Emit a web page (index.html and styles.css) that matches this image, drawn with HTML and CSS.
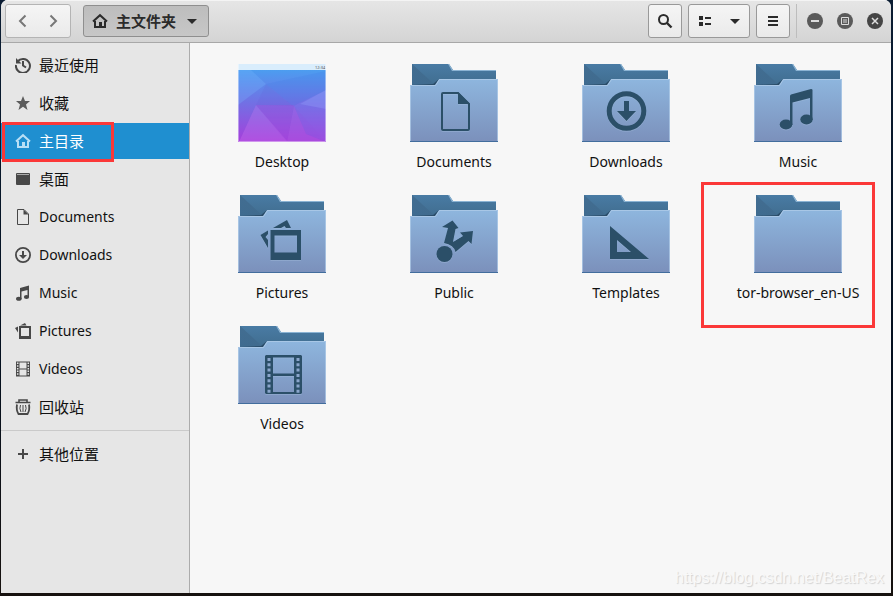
FILE: index.html
```html
<!DOCTYPE html>
<html lang="zh-CN">
<head>
<meta charset="utf-8">
<meta name="viewport" content="width=device-width, initial-scale=1">
<title>主文件夹</title>
<link rel="stylesheet" href="styles.css">
</head>
<body>
<svg class="defs" aria-hidden="true">
  <defs>
    <linearGradient id="front" x1="0" y1="0" x2="0" y2="1"><stop offset="0" stop-color="#8eb6de"/><stop offset="1" stop-color="#7b90bb"/></linearGradient>
    <linearGradient id="back" x1="0" y1="0" x2="0" y2="1"><stop offset="0" stop-color="#497ba4"/><stop offset="1" stop-color="#3f6b8c"/></linearGradient>
    <linearGradient id="fold" x1="0" y1="1" x2="1" y2="0"><stop offset="0" stop-color="#3f6b90"/><stop offset="1" stop-color="#41698a"/></linearGradient>
    <linearGradient id="wall" x1="0" y1="0" x2="0" y2="1"><stop offset="0" stop-color="#45a5f2"/><stop offset=".5" stop-color="#7270e4"/><stop offset="1" stop-color="#a63edb"/></linearGradient>
    <symbol id="folder" viewBox="0 0 88 78">
      <path d="M2 0H39L43 6H86V24H2Z" fill="url(#back)"/>
      <path d="M2 0L25 21H2Z" fill="url(#fold)" opacity=".8"/>
      <path d="M39 0L43 6H86V7H42L38 0Z" fill="#8bb3d3"/>
      <path d="M2 21L23 20L29 15V22H2Z" fill="#2b4d69"/>
      <path d="M0 21H25L29 15H88V78H0Z" fill="url(#front)"/>
      <path d="M.5 77V21.500H25.500L29.500 15.500H87.500V77" fill="none" stroke="#b4cfe9" stroke-opacity=".7"/>
      <path d="M0 77H88V78H0Z" fill="#426d9d"/>
    </symbol>
    <symbol id="home" viewBox="0 0 16 16"><path d="M1 8.500L8 2.200L15 8.500" fill="none" stroke="currentColor" stroke-width="2"/><path d="M3 8V14H13V8" fill="none" stroke="currentColor" stroke-width="2"/><path d="M7 9H10V14H7Z" fill="currentColor"/></symbol>
  </defs>
</svg>
<div class="window">
  <header class="bar">
    <div class="box nav">
      <button aria-label="后退"><svg width="16" height="16" viewBox="0 0 16 16"><path d="M11.500 2.500L6 8L11.500 13.500" fill="none" stroke="#777" stroke-width="2"/></svg></button>
      <button aria-label="前进"><svg width="16" height="16" viewBox="0 0 16 16"><path d="M4.500 2.500L10 8L4.500 13.500" fill="none" stroke="#777" stroke-width="2"/></svg></button>
    </div>
    <button class="path">
      <svg width="16" height="16"><use href="#home"/></svg>
      <span>主文件夹</span>
      <svg width="16" height="16" viewBox="0 0 16 16"><path d="M3 6H13L8 11Z" fill="currentColor"/></svg>
    </button>
    <div class="tools">
      <button class="box square" aria-label="搜索"><svg width="16" height="16" viewBox="0 0 16 16"><circle cx="6.500" cy="6.500" r="4.500" fill="none" stroke="currentColor" stroke-width="2"/><path d="M10 10L14.500 14.500" stroke="currentColor" stroke-width="2.400"/></svg></button>
      <div class="box view">
        <button aria-label="列表视图"><svg width="16" height="16" viewBox="0 0 16 16"><path d="M3 3H7V7H3ZM3 9H7V13H3ZM9 4H15V6H9ZM9 10H15V12H9Z" fill="currentColor"/></svg></button>
        <button aria-label="视图选项"><svg width="16" height="16" viewBox="0 0 16 16"><path d="M4 6H14L9 11Z" fill="currentColor"/></svg></button>
      </div>
      <button class="box square" aria-label="菜单"><svg width="16" height="16" viewBox="0 0 16 16"><path d="M3 3H13V5H3ZM3 7H13V9H3ZM3 11H13V13H3Z" fill="currentColor"/></svg></button>
    </div>
    <div class="controls">
      <button aria-label="最小化"><svg width="16" height="16" viewBox="0 0 16 16"><circle cx="8" cy="8" r="8" fill="#5a5a5a"/><path d="M4 7H12V9H4Z" fill="#ddd"/></svg></button>
      <button aria-label="最大化"><svg width="16" height="16" viewBox="0 0 16 16"><circle cx="8" cy="8" r="8" fill="#5a5a5a"/><path d="M4.500 4.500H11.500V11.500H4.500Z" fill="none" stroke="#ddd"/><path d="M6 6H10V10H6Z" fill="#999"/></svg></button>
      <button aria-label="关闭"><svg width="16" height="16" viewBox="0 0 16 16"><circle cx="8" cy="8" r="8" fill="#454545"/><path d="M5 5L11 11M11 5L5 11" stroke="#ddd" stroke-width="1.500"/></svg></button>
    </div>
  </header>
  <div class="body">
    <nav class="side">
      <a href="#recent"><svg width="16" height="16" viewBox="0 0 16 16"><path d="M2.500 4.500A7 7 0 1 1 1 8" fill="none" stroke="currentColor" stroke-width="2"/><path d="M1 1V6.500H6.500Z" fill="currentColor"/><path d="M8 4V8.500L11 10.500" fill="none" stroke="currentColor" stroke-width="2"/></svg><span class="zh">最近使用</span></a>
      <a href="#starred"><svg width="16" height="16" viewBox="0 0 16 16"><path d="M8 1L10 6H15L11 9.500L12.500 15L8 11.700L3.500 15L5 9.500L1 6H6Z" fill="#5c5c5c"/></svg><span class="zh">收藏</span></a>
      <a href="#home-dir" class="active" aria-current="page"><svg width="16" height="16"><use href="#home"/></svg><span class="zh">主目录</span></a>
      <a href="#desktop"><svg width="16" height="16" viewBox="0 0 16 16"><rect x="1" y="2" width="14" height="12" rx="1" fill="currentColor"/><path d="M2 3.500H14" stroke="#aaa"/></svg><span class="zh">桌面</span></a>
      <a href="#documents"><svg width="16" height="16" viewBox="0 0 16 16"><path d="M2.500 .5H9L13.500 5V15.500H2.500Z" fill="none" stroke="currentColor"/><path d="M8.500 .5L13.500 5.500H8.500Z" fill="currentColor"/></svg><span>Documents</span></a>
      <a href="#downloads"><svg width="16" height="16" viewBox="0 0 16 16"><circle cx="8" cy="8" r="7.100" fill="none" stroke="currentColor" stroke-width="1.800"/><path d="M7 4H9V8H12L8 12L4 8H7Z" fill="currentColor"/></svg><span>Downloads</span></a>
      <a href="#music"><svg width="16" height="16" viewBox="0 0 16 16"><path d="M5 3L14 .5V12H12.500V5L6.500 6.500V14H5Z" fill="currentColor"/><ellipse cx="3.800" cy="13.700" rx="2.800" ry="2" fill="currentColor"/><ellipse cx="11.500" cy="12" rx="2.600" ry="2" fill="currentColor"/></svg><span>Music</span></a>
      <a href="#pictures"><svg width="16" height="16" viewBox="0 0 16 16"><path d="M4 3H16V16H4ZM6 5V13H14V5Z" fill="currentColor" fill-rule="evenodd"/><path d="M5 2.500L10 0L11.500 2.500ZM0 5L3 3.500V9.500Z" fill="currentColor"/></svg><span>Pictures</span></a>
      <a href="#videos"><svg width="16" height="16" viewBox="0 0 16 16"><path d="M1 .5H15V15.500H1ZM4.500 1.500V7.500H11.500V1.500ZM4.500 8.500V14.500H11.500V8.500Z" fill="currentColor" fill-rule="evenodd"/><path d="M2.700 1.500V15M13.300 1.500V15" stroke="#e6e6e6" stroke-width="1.500" stroke-dasharray="1.500 1.200"/></svg><span>Videos</span></a>
      <a href="#trash"><svg width="16" height="16" viewBox="0 0 16 16"><path d="M.5 3.500H15.500M4 3V1H12V3" fill="none" stroke="currentColor" stroke-width="1.600"/><path d="M2 5.500Q1 11 3.500 15H12.500Q15 11 14 5.500" fill="none" stroke="currentColor" stroke-width="1.800"/><path d="M5.500 6Q4 9.500 6 13M8 6V13M10.500 6Q12 9.500 10 13" fill="none" stroke="currentColor"/></svg><span class="zh">回收站</span></a>
      <hr>
      <a href="#other"><svg width="16" height="16" viewBox="0 0 16 16"><path d="M8 3V13M3 8H13" stroke="currentColor" stroke-width="2"/></svg><span class="zh">其他位置</span></a>
    </nav>
    <main class="files">
      <figure>
        <svg class="art" viewBox="0 0 88 78">
          <path d="M0 0H88V78H0Z" fill="url(#wall)"/>
          <path d="M0 6H13L28 20L0 41Z" fill="#7bbcff" opacity=".25"/>
          <path d="M28 20L88 7V26L55 42L28 20Z" fill="#3b78e2" opacity=".18"/>
          <path d="M28 20L18 41L55 42Z" fill="#6556cf" opacity=".12"/>
          <path d="M88 26L56 42L68 70L88 78Z" fill="#7f7bf0" opacity=".22"/>
          <path d="M88 26L62 40L88 45Z" fill="#a0b0ff" opacity=".25"/>
          <path d="M18 41L1 78H50Z" fill="#d07cf0" opacity=".28"/>
          <path d="M18 41H56L49 78Z" fill="#ae4adb" opacity=".25"/>
          <path d="M56 42L49 78H88L68 70Z" fill="#c568e8" opacity=".3"/>
          <path d="M18 41L56 42L88 78H49Z" fill="#9251dc" opacity=".15"/>
          <path d="M0 0H88V6H0Z" fill="#d9edfc"/>
          <text x="77" y="5" class="clock">12:34</text>
          <path d="M.5 0V77.500H87.500V0" fill="none" stroke="#fff" stroke-opacity=".4"/>
        </svg>
        <figcaption>Desktop</figcaption>
      </figure>
      <figure>
        <svg class="art" viewBox="0 0 88 78"><use href="#folder"/><g class="glyph"><path d="M33 29H48L59 40V65Q59 66 58 66H33Q32 66 32 65V30Q32 29 33 29Z" fill="none" stroke="#2b4f68" stroke-width="2"/><path d="M48 28L60 40H48Z"/></g></svg>
        <figcaption>Documents</figcaption>
      </figure>
      <figure>
        <svg class="art" viewBox="0 0 88 78"><use href="#folder"/><g class="glyph"><circle cx="44.500" cy="47" r="17.300" fill="none" stroke="#2b4f68" stroke-width="5"/><path d="M42 37H47V47H54L44.500 57L35 47H42Z"/></g></svg>
        <figcaption>Downloads</figcaption>
      </figure>
      <figure>
        <svg class="art" viewBox="0 0 88 78"><use href="#folder"/><g class="glyph"><path d="M36 32Q36 31 37 30.500L57 25Q58.500 25 58.500 26V56H56V34L38.500 38.500V61H36Z"/><ellipse cx="32" cy="60.500" rx="6.300" ry="5"/><ellipse cx="52.500" cy="55.500" rx="6.200" ry="5"/></g></svg>
        <figcaption>Music</figcaption>
      </figure>
      <figure>
        <svg class="art" viewBox="0 0 88 78"><use href="#folder"/><g class="glyph"><path d="M32.500 35H63V65H32.500ZM36.500 40.500V57.500H59V40.500Z" fill-rule="evenodd"/><path d="M35 33L49 25L53 33H48L46.500 31L43 33ZM22.500 40L30 35.500V39L27.500 42L30 45V53Z"/></g></svg>
        <figcaption>Pictures</figcaption>
      </figure>
      <figure>
        <svg class="art" viewBox="0 0 88 78"><use href="#folder"/><g class="glyph"><circle cx="34.500" cy="59" r="8"/><path d="M42.500 25.500L48.500 33L45.500 34L43 47L53 41L50 37.500L63 36L61.500 49L58.500 46L45.500 57Q44 50 34 48L38 33L32 32Z"/><path d="M46 35L52.500 41L43.500 46.500Z" fill="#8aabd3"/></g></svg>
        <figcaption>Public</figcaption>
      </figure>
      <figure>
        <svg class="art" viewBox="0 0 88 78"><use href="#folder"/><g class="glyph"><path d="M28 31V64H67ZM35 45L49 57H35Z" fill-rule="evenodd"/></g></svg>
        <figcaption>Templates</figcaption>
      </figure>
      <figure class="marked">
        <svg class="art" viewBox="0 0 88 78"><use href="#folder"/></svg>
        <figcaption>tor-browser_en-US</figcaption>
      </figure>
      <figure>
        <svg class="art" viewBox="0 0 88 78"><use href="#folder"/><g class="glyph"><path d="M28 29H63L64 30V67L63 68H28L27 67V30ZM35 31.500V47.500H56V31.500ZM35 50V66H56V50Z" fill-rule="evenodd"/><path d="M31 32V67M60 32V67" stroke="#8ba6cc" stroke-width="3" stroke-dasharray="3 2.300"/></g></svg>
        <figcaption>Videos</figcaption>
      </figure>
      <p class="watermark">https://blog.csdn.net/BeatRex</p>
    </main>
  </div>
</div>
</body>
</html>
```

FILE: styles.css
```css
*, *::after { box-sizing: border-box; }

body {
  margin: 0;
  height: 100vh;
  padding: 0 2px 3px 1px;
  background: linear-gradient(#0b1d33, #04101f 60%, #17120f);
  font: 14px/20px "Noto Sans", "Noto Sans CJK SC", sans-serif;
  color: #111;
}

.defs { position: absolute; width: 0; height: 0; }

svg { display: block; flex: none; }

button {
  margin: 0;
  padding: 0;
  border: 0;
  background: none;
  color: #2b2b2b;
  font: inherit;
  display: flex;
  align-items: center;
  justify-content: center;
}

.window {
  height: 100%;
  display: flex;
  flex-direction: column;
  border-radius: 7px 7px 0 0;
  overflow: hidden;
  background: #f7f7f7;
}

.bar {
  display: flex;
  align-items: center;
  height: 43px;
  padding: 0 8px 0 4px;
  border-bottom: 1px solid #a8a8a8;
  box-shadow: inset 0 1px #f4f4f4;
  background: linear-gradient(#e6e6e6, #d4d4d4);
}

.box {
  height: 34px;
  border: 1px solid #999;
  border-radius: 3px;
  background: linear-gradient(#f5f5f5, #eaeaea);
}

.nav { display: flex; width: 66px; border-color: #b4b4b4; }
.nav button, .view button { flex: 1; }
.square { width: 34px; }
.view { display: flex; width: 62px; }

.path {
  width: 126px;
  height: 32px;
  margin-left: 12px;
  gap: 8px;
  border: 1px solid #8f8f8f;
  border-radius: 3px;
  background: linear-gradient(#bdbdbd, #c7c7c7);
  font-size: 15px;
  font-weight: 700;
}

.tools { display: flex; gap: 6px; margin-left: auto; }

.controls {
  display: flex;
  align-items: center;
  gap: 14px;
  height: 34px;
  margin-left: 6px;
  padding-left: 10px;
  border-left: 1px solid #bdbdbd;
}

.body { display: flex; flex: 1; min-height: 0; }

.side {
  display: flex;
  flex-direction: column;
  gap: 2px;
  width: 189px;
  padding-top: 4px;
  border-right: 1px solid #acacac;
  background: #e6e6e6;
}

.side a {
  position: relative;
  display: flex;
  align-items: center;
  gap: 8px;
  height: 36px;
  padding-left: 14px;
  color: #111;
  text-decoration: none;
}

.side svg { color: #484848; }
.side .zh { font-size: 15px; }

.side .active { background: #1f8fd0; color: #fff; }
.side .active svg { color: #b9dff5; }

.side .active::after {
  content: "";
  position: absolute;
  inset: -1px auto -3px 1px;
  width: 112px;
  border: 3px solid #fb3838;
}

.side hr {
  width: 100%;
  margin: 3px 0;
  border: 0;
  border-top: 1px solid #cacaca;
}

.files {
  position: relative;
  flex: 1;
  display: grid;
  grid-template-columns: repeat(auto-fill, 172px);
  grid-auto-rows: 131px;
  align-content: start;
  padding: 21px 0 0 6px;
  background: #f7f7f7;
}

figure {
  position: relative;
  display: flex;
  flex-direction: column;
  align-items: center;
  gap: 10px;
  margin: 0;
}

.art { width: 88px; height: 78px; }
.glyph { fill: #2b4f68; filter: drop-shadow(0 1px 0 #a4bfdd66); }
.clock { font-size: 4px; fill: #555; }

.marked::after {
  content: "";
  position: absolute;
  inset: -13px 9px -2px -11px;
  border: 3px solid #fb3838;
}

.watermark {
  position: absolute;
  right: 7px;
  bottom: 5px;
  margin: 0;
  color: #f9f9f9;
  font: 16px/20px "Liberation Sans", sans-serif;
  text-shadow: 1px 1px 1px #d2d2d2;
}
```
